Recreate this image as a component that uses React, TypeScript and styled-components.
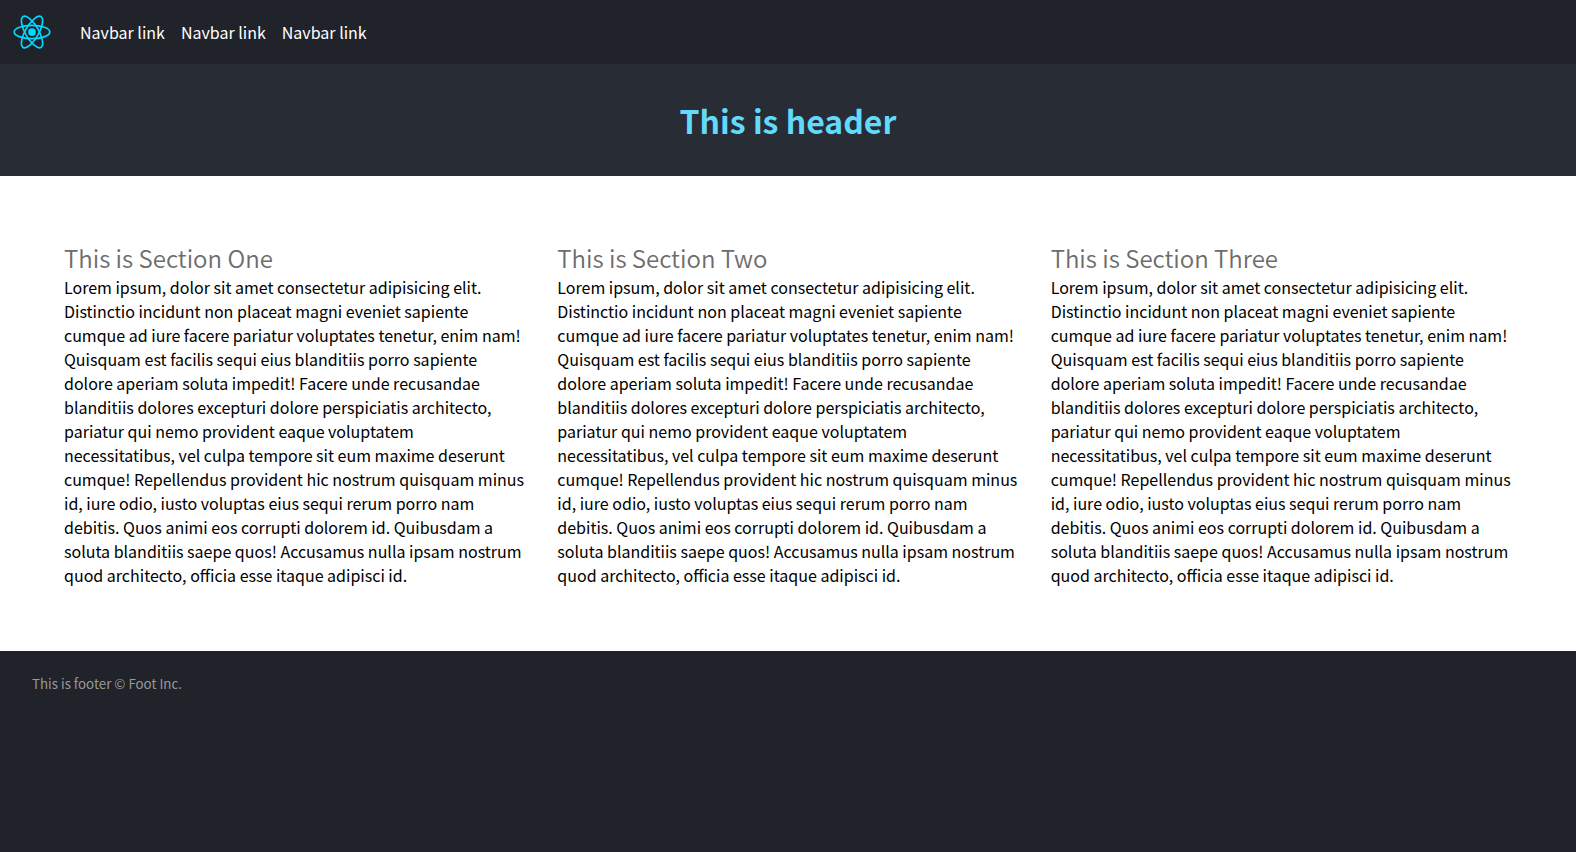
import React from 'react';
import styled, { createGlobalStyle } from 'styled-components';

const GlobalStyle = createGlobalStyle`
  * { margin: 0; padding: 0; box-sizing: border-box; }
  body {
    font-family: "Noto Sans CJK JP", "Noto Sans CJK SC", sans-serif;
    font-size: 16px;
    line-height: 24px;
    color: #000;
    background: #fff;
  }
`;

const Page = styled.div`
  display: flex;
  flex-direction: column;
  height: 852px;
  overflow: hidden;
`;

const Navbar = styled.nav`
  display: flex;
  align-items: center;
  height: 64px;
  background: #20232a;
`;

const Logo = styled.svg`
  width: 64px;
  height: 64px;
  flex: none;
`;

const NavLinks = styled.ul`
  display: flex;
  gap: 16px;
  padding-left: 16px;
  list-style: none;
`;

const NavLink = styled.a`
  color: #fff;
  text-decoration: none;
`;

const Header = styled.header`
  height: 112px;
  padding: 32px;
  background: #282c34;
  text-align: center;
`;

const Title = styled.h1`
  font-size: 32px;
  line-height: 48px;
  font-weight: 700;
  color: #61dafb;
`;

const Main = styled.main`
  display: grid;
  grid-template-columns: repeat(3, 1fr);
  gap: 32px;
  height: 475px;
  padding: 64px;
`;

const SectionTitle = styled.h2`
  font-size: 24px;
  line-height: 35px;
  font-weight: 350;
  color: #6d6d6d;
`;

const Footer = styled.footer`
  flex: 1;
  padding: 21px 32px;
  background: #20232a;
  font-size: 13.3333px;
  color: #999;
`;

const lorem =
  'Lorem ipsum, dolor sit amet consectetur adipisicing elit. Distinctio incidunt non placeat magni eveniet sapiente cumque ad iure facere pariatur voluptates tenetur, enim nam! Quisquam est facilis sequi eius blanditiis porro sapiente dolore aperiam soluta impedit! Facere unde recusandae blanditiis dolores excepturi dolore perspiciatis architecto, pariatur qui nemo provident eaque voluptatem necessitatibus, vel culpa tempore sit eum maxime deserunt cumque! Repellendus provident hic nostrum quisquam minus id, iure odio, iusto voluptas eius sequi rerum porro nam debitis. Quos animi eos corrupti dolorem id. Quibusdam a soluta blanditiis saepe quos! Accusamus nulla ipsam nostrum quod architecto, officia esse itaque adipisci id.';

// One orbit around the nucleus; the logo repeats it at three angles.
const orbit =
  'M0-87C62-87 120-78 163-63C207-48 234-23 234 0C234 24 204 48 160 63.5C118 78 60 87 0 87C-61 87 -118 78 -160 63.5C-205 48 -234 23 -234 0C-234 -22 -207 -47 -164 -62C-121 -78 -63 -87 0 -87Z';

export default function App() {
  return (
    <Page>
      <GlobalStyle />
      <Navbar>
        <Logo viewBox="-421 -421 841.9 841.9" fill="none" stroke="#00d8ff" strokeWidth="22.3">
          <circle r="51" fill="#00d8ff" stroke="none" />
          {[0, 60, 120].map((angle) => (
            <path key={angle} d={orbit} transform={`rotate(${angle})`} />
          ))}
        </Logo>
        <NavLinks>
          {[1, 2, 3].map((n) => (
            <li key={n}>
              <NavLink href="#">Navbar link</NavLink>
            </li>
          ))}
        </NavLinks>
      </Navbar>
      <Header>
        <Title>This is header</Title>
      </Header>
      <Main>
        {['One', 'Two', 'Three'].map((name) => (
          <section key={name}>
            <SectionTitle>This is Section {name}</SectionTitle>
            <p>{lorem}</p>
          </section>
        ))}
      </Main>
      <Footer>This is footer © Foot Inc.</Footer>
    </Page>
  );
}
